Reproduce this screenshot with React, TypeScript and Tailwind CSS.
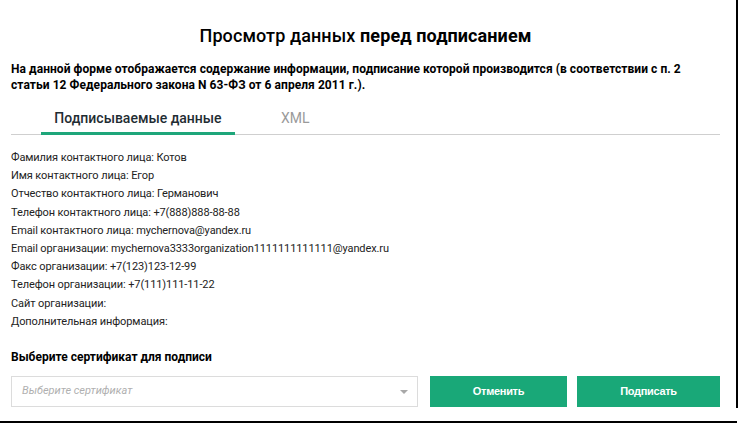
import React from 'react';

const fields = [
  'Фамилия контактного лица: Котов',
  'Имя контактного лица: Егор',
  'Отчество контактного лица: Германович',
  'Телефон контактного лица: +7(888)888-88-88',
  'Email контактного лица: mychernova@yandex.ru',
  'Email организации: mychernova3333organization1111111111111@yandex.ru',
  'Факс организации: +7(123)123-12-99',
  'Телефон организации: +7(111)111-11-22',
  'Сайт организации:',
  'Дополнительная информация:',
];

const App: React.FC = () => {
  return (
    <div className="w-[739px] h-[424px] bg-white overflow-hidden font-['Roboto',sans-serif] text-[#111]">
      {/* Modal body */}
      <div className="w-[738px] h-[408px] border-r-2 border-black pl-[11px] pr-[16px] pt-[24px] flex flex-col">
        <h1 className="text-[18px] leading-[24px] text-center text-black tracking-[0.1px]">
          <span className="font-medium">Просмотр данных </span>
          <span className="font-bold">перед подписанием</span>
        </h1>

        <p className="mt-[14px] text-[12px] leading-[15.5px] font-bold text-black tracking-[0.06px]">
          На данной форме отображается содержание информации, подписание которой производится (в соответствии с п. 2
          <br />
          статьи 12 Федерального закона N 63-ФЗ от 6 апреля 2011 г.).
        </p>

        {/* Tabs */}
        <div className="mt-[15px] flex items-start border-b border-[#cfcfcf]">
          <div className="ml-[30px] w-[194px] -mb-px pb-[4px] border-b-[3px] border-[#1ea67a] text-center text-[14px] leading-[20px] font-medium text-[#1f2d33]">
            Подписываемые данные
          </div>
          <div className="ml-[46px] text-[14px] leading-[20px] text-[#9a9a9a]">XML</div>
        </div>

        {/* Signed fields */}
        <div className="mt-[14px] flex flex-col">
          {fields.map((f) => (
            <div key={f} className="text-[11px] leading-[18.2px] text-[#222] tracking-[-0.1px]">
              {f}
            </div>
          ))}
        </div>

        <div className="mt-[18px] text-[12px] leading-[16px] font-bold text-black">
          Выберите сертификат для подписи
        </div>

        <div className="mt-[11px] flex items-stretch h-[31px]">
          <div className="w-[407px] border border-[#dcdcdc] flex items-center justify-between pl-[10px] pr-[9px]">
            <span className="text-[11px] italic text-[#b0b0b0]">Выберите сертификат</span>
            <svg width="8" height="4" viewBox="0 0 8 4">
              <path d="M0 0 L8 0 L4 4 Z" fill="#a8a8a8" />
            </svg>
          </div>
          <button className="ml-[12px] w-[137px] bg-[#19a878] text-white text-[11px] font-bold font-['Liberation_Sans',sans-serif] tracking-[-0.3px]">
            Отменить
          </button>
          <button className="ml-[10px] w-[143px] bg-[#19a878] text-white text-[11px] font-bold font-['Liberation_Sans',sans-serif] tracking-[-0.3px]">
            Подписать
          </button>
        </div>
      </div>
      <div className="mt-[13px] w-[737px] h-[2px] bg-black" />
    </div>
  );
};

export default App;
